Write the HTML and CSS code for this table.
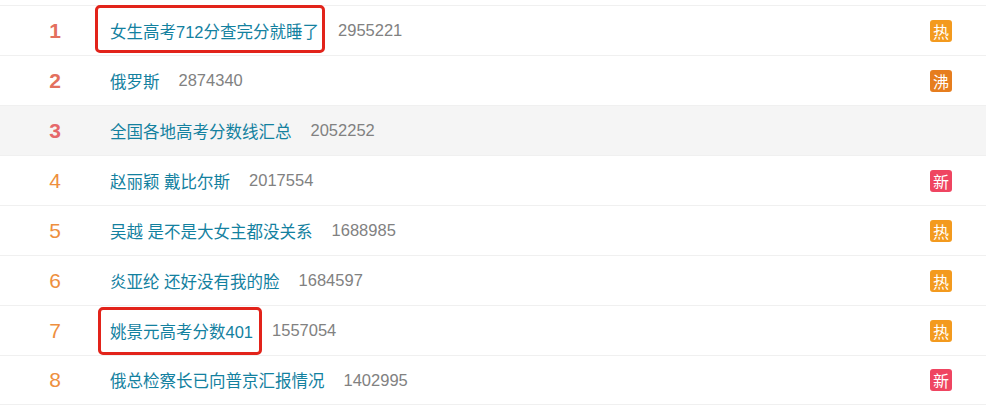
FILE: index.html
```html
<!DOCTYPE html>
<html lang="zh-CN">
<head>
    <meta charset="UTF-8">
    <title>热搜榜</title>
    <link rel="stylesheet" href="styles.css">
</head>
<body>
    <div id="hot-list">
        <div class="row">
            <div class="rank top">1</div>
            <div class="topic">
                <a href="#">女生高考712分查完分就睡了</a>
                <span class="count">2955221</span>
                <span class="mark mark-1"></span>
            </div>
            <div class="tag"><span class="icon hot">热</span></div>
        </div>
        <div class="row">
            <div class="rank top">2</div>
            <div class="topic">
                <a href="#">俄罗斯</a>
                <span class="count">2874340</span>
            </div>
            <div class="tag"><span class="icon boil">沸</span></div>
        </div>
        <div class="row hover">
            <div class="rank top third">3</div>
            <div class="topic">
                <a href="#">全国各地高考分数线汇总</a>
                <span class="count">2052252</span>
            </div>
            <div class="tag"></div>
        </div>
        <div class="row">
            <div class="rank">4</div>
            <div class="topic">
                <a href="#">赵丽颖 戴比尔斯</a>
                <span class="count">2017554</span>
            </div>
            <div class="tag"><span class="icon new">新</span></div>
        </div>
        <div class="row">
            <div class="rank">5</div>
            <div class="topic">
                <a href="#">吴越 是不是大女主都没关系</a>
                <span class="count">1688985</span>
            </div>
            <div class="tag"><span class="icon hot">热</span></div>
        </div>
        <div class="row">
            <div class="rank">6</div>
            <div class="topic">
                <a href="#">炎亚纶 还好没有我的脸</a>
                <span class="count">1684597</span>
            </div>
            <div class="tag"><span class="icon hot">热</span></div>
        </div>
        <div class="row">
            <div class="rank">7</div>
            <div class="topic">
                <a href="#">姚景元高考分数401</a>
                <span class="count">1557054</span>
                <span class="mark mark-7"></span>
            </div>
            <div class="tag"><span class="icon hot">热</span></div>
        </div>
        <div class="row">
            <div class="rank">8</div>
            <div class="topic">
                <a href="#">俄总检察长已向普京汇报情况</a>
                <span class="count">1402995</span>
            </div>
            <div class="tag"><span class="icon new">新</span></div>
        </div>
    </div>
</body>
</html>
```

FILE: styles.css
```css
body {
    margin: 0;
    background-color: #fff;
    font-family: "Liberation Sans", "Noto Sans CJK SC", sans-serif;
}

#hot-list {
    padding-top: 5px;
}

.row {
    display: grid;
    grid-template-columns: 110px 1fr 52px 19px;
    align-items: center;
    height: 50px;
    box-sizing: border-box;
    border-top: 1px solid #f0f0f0;
}

.row:last-child {
    border-bottom: 1px solid #f0f0f0;
}

.row.hover {
    background-color: #f5f5f5;
}

.rank {
    text-align: center;
    font-size: 21px;
    color: #ee8f3e;
}

.rank.top {
    font-weight: bold;
    color: #e3705e;
}

.rank.third {
    color: #e5686b;
}

.topic {
    position: relative;
    align-self: stretch;
    display: flex;
    align-items: center;
    font-size: 16.5px;
}

.topic a {
    color: #13819f;
    text-decoration: none;
}

.count {
    margin-left: 19px;
    color: #818181;
}

/* red annotation boxes drawn over the screenshot */
.mark {
    position: absolute;
    box-sizing: border-box;
    border: 3px solid #e2231a;
    border-radius: 5px;
}

.mark-1 {
    left: -15px;
    top: -1px;
    width: 230px;
    height: 48px;
}

.mark-7 {
    left: -12px;
    top: 1px;
    width: 164px;
    height: 48px;
}

.tag {
    display: flex;
    justify-content: center;
}

.icon {
    width: 22px;
    height: 22px;
    border-radius: 3px;
    color: #fff;
    font-size: 16px;
    line-height: 22px;
    text-align: center;
    font-family: "Noto Sans CJK SC", sans-serif;
}

.icon.hot {
    background-color: #f39a1e;
}

.icon.boil {
    background-color: #e67d1e;
}

.icon.new {
    background-color: #ef4561;
}
```
